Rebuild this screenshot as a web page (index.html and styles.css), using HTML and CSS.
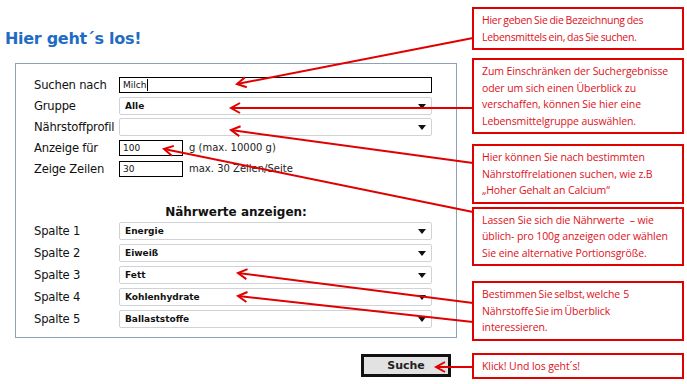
FILE: index.html
```html
<!DOCTYPE html>
<html lang="de">
<head>
<meta charset="utf-8">
<title>Hier geht´s los!</title>
<link rel="stylesheet" href="styles.css">
</head>
<body>
<div class="page">
  <main class="main">
    <h1 class="title">Hier geht´s los!</h1>
    <div class="formbox">
      <div class="rows top">
        <div class="label">Suchen nach</div>
        <div class="field"><div class="input wide">Milch<span class="cursor"></span></div></div>
        <div class="label">Gruppe</div>
        <div class="field"><div class="select">Alle<span class="caret"></span></div></div>
        <div class="label">Nährstoffprofil</div>
        <div class="field"><div class="select"><span class="caret"></span></div></div>
        <div class="label">Anzeige für</div>
        <div class="field"><div class="input small">100</div><span class="hint">g (max. 10000 g)</span></div>
        <div class="label">Zeige Zeilen</div>
        <div class="field"><div class="input small">30</div><span class="hint">max. 30 Zeilen/Seite</span></div>
      </div>
      <div class="subhead">Nährwerte anzeigen:</div>
      <div class="rows cols">
        <div class="label">Spalte 1</div>
        <div class="field"><div class="select">Energie<span class="caret"></span></div></div>
        <div class="label">Spalte 2</div>
        <div class="field"><div class="select">Eiweiß<span class="caret"></span></div></div>
        <div class="label">Spalte 3</div>
        <div class="field"><div class="select">Fett<span class="caret"></span></div></div>
        <div class="label">Spalte 4</div>
        <div class="field"><div class="select">Kohlenhydrate<span class="caret"></span></div></div>
        <div class="label">Spalte 5</div>
        <div class="field"><div class="select">Ballaststoffe<span class="caret"></span></div></div>
      </div>
    </div>
    <div class="actions"><button class="btn">Suche</button></div>
  </main>
  <aside class="notes">
    <div class="note n1">Hier geben Sie die Bezeichnung des<br>Lebensmittels ein, das Sie suchen.</div>
    <div class="note n2">Zum Einschränken der Suchergebnisse<br>oder um sich einen Überblick zu<br>verschaffen, können Sie hier eine<br>Lebensmittelgruppe auswählen.</div>
    <div class="note n3">Hier können Sie nach bestimmten<br>Nährstoffrelationen suchen, wie z.B<br>„Hoher Gehalt an Calcium“</div>
    <div class="note n4">Lassen Sie sich die Nährwerte &nbsp;– wie<br>üblich- pro 100g anzeigen oder wählen<br>Sie eine alternative Portionsgröße.</div>
    <div class="note n5">Bestimmen Sie selbst, welche &nbsp;5<br>Nährstoffe Sie im Überblick<br>interessieren.</div>
    <div class="note n6">Klick! Und los geht´s!</div>
  </aside>
  <svg class="arrows" width="687" height="384" viewBox="0 0 687 384">
    <defs>
      <marker id="head" markerUnits="userSpaceOnUse" markerWidth="20" markerHeight="20" refX="0" refY="0" viewBox="-2 -10 20 20" orient="auto" overflow="visible">
        <path d="M9,-5 L0,0 L9,5" fill="none" stroke="#e00000" stroke-width="2"/>
      </marker>
    </defs>
    <g stroke="#e00000" stroke-width="2" fill="none">
      <line x1="237" y1="84" x2="473" y2="38" marker-start="url(#head)"/>
      <line x1="231" y1="108" x2="473" y2="108" marker-start="url(#head)"/>
      <line x1="231" y1="130" x2="473" y2="163" marker-start="url(#head)"/>
      <line x1="164" y1="149" x2="473" y2="212" marker-start="url(#head)"/>
      <line x1="238" y1="273" x2="473" y2="303" marker-start="url(#head)"/>
      <line x1="238" y1="296" x2="473" y2="322" marker-start="url(#head)"/>
      <line x1="436" y1="367" x2="473" y2="367" marker-start="url(#head)"/>
    </g>
  </svg>
</div>
</body>
</html>
```
FILE: styles.css
```css
html, body {
  margin: 0;
  padding: 0;
  background: #ffffff;
}
body {
  width: 687px;
  height: 384px;
  overflow: hidden;
  font-family: "DejaVu Sans", Verdana, sans-serif;
  color: #111;
}
.page {
  position: relative;
  display: flex;
  width: 687px;
  height: 384px;
}
.main {
  width: 472px;
  flex: none;
}
.title {
  margin: 29px 0 0 5px;
  font-size: 16px;
  line-height: 20px;
  font-weight: bold;
  color: #1f6cc4;
  letter-spacing: -0.3px;
}
.formbox {
  margin: 14px 0 0 15px;
  width: 440px;
  height: 273px;
  border: 1px solid #8ea3b8;
  box-sizing: content-box;
}
.rows {
  display: grid;
  grid-template-columns: 85px 313px;
  padding-left: 18px;
}
.rows.top {
  margin-top: 10px;
  grid-auto-rows: 21px;
}
.rows.cols {
  grid-auto-rows: 22px;
}
.label {
  font-size: 11.6px;
  display: flex;
  align-items: center;
  white-space: nowrap;
  letter-spacing: -0.2px;
}
.field {
  display: flex;
  align-items: center;
}
.input {
  box-sizing: border-box;
  height: 16px;
  border: 1px solid #000;
  background: #fff;
  font-family: "DejaVu Sans", Verdana, sans-serif;
  font-size: 9px;
  line-height: 14px;
  padding-left: 3px;
  display: flex;
  align-items: center;
}
.input.wide { width: 313px; }
.input.small { width: 64px; }
.cursor {
  display: inline-block;
  width: 1px;
  height: 12px;
  background: #000;
  margin-left: 1px;
}
.hint {
  font-size: 10px;
  margin-left: 6px;
  color: #222;
}
.select {
  position: relative;
  box-sizing: border-box;
  width: 313px;
  height: 18px;
  border: 1px solid #d0d3d6;
  border-radius: 2px;
  background: #fff;
  font-size: 9px;
  font-weight: bold;
  padding-left: 5px;
  display: flex;
  align-items: center;
}
.caret {
  position: absolute;
  right: 5px;
  top: 6px;
  width: 0;
  height: 0;
  border-left: 4px solid transparent;
  border-right: 4px solid transparent;
  border-top: 5px solid #111;
}
.subhead {
  margin-top: 26px;
  text-align: center;
  font-size: 12px;
  font-weight: bold;
  line-height: 14px;
  height: 14px;
  margin-bottom: 1px;
}
.actions {
  display: flex;
  justify-content: flex-end;
  padding-right: 21px;
  margin-top: 16px;
}
.btn {
  width: 90px;
  height: 23px;
  border: 3px solid #111;
  background: #e2e2e2;
  font-family: "DejaVu Sans", Verdana, sans-serif;
  font-size: 11px;
  font-weight: bold;
  color: #222;
  padding: 0;
}
.notes {
  width: 212px;
  flex: none;
  display: flex;
  flex-direction: column;
}
.note {
  border: 2px solid #e00000;
  padding: 3px 8px;
  font-family: "Open Sans", "Noto Sans", sans-serif;
  font-size: 10.5px;
  line-height: 16.5px;
  color: #e0101a;
  white-space: nowrap;
  letter-spacing: -0.1px;
}
.n1 { margin-top: 7px; letter-spacing: -0.3px; word-spacing: -0.5px; }
.n2 { margin-top: 8px; }
.n3 { margin-top: 10px; }
.n4 { margin-top: 3px; }
.n5 { margin-top: 15px; word-spacing: -1px; }
.n6 { margin-top: 12px; }
.arrows {
  position: absolute;
  left: 0;
  top: 0;
  pointer-events: none;
}
```
